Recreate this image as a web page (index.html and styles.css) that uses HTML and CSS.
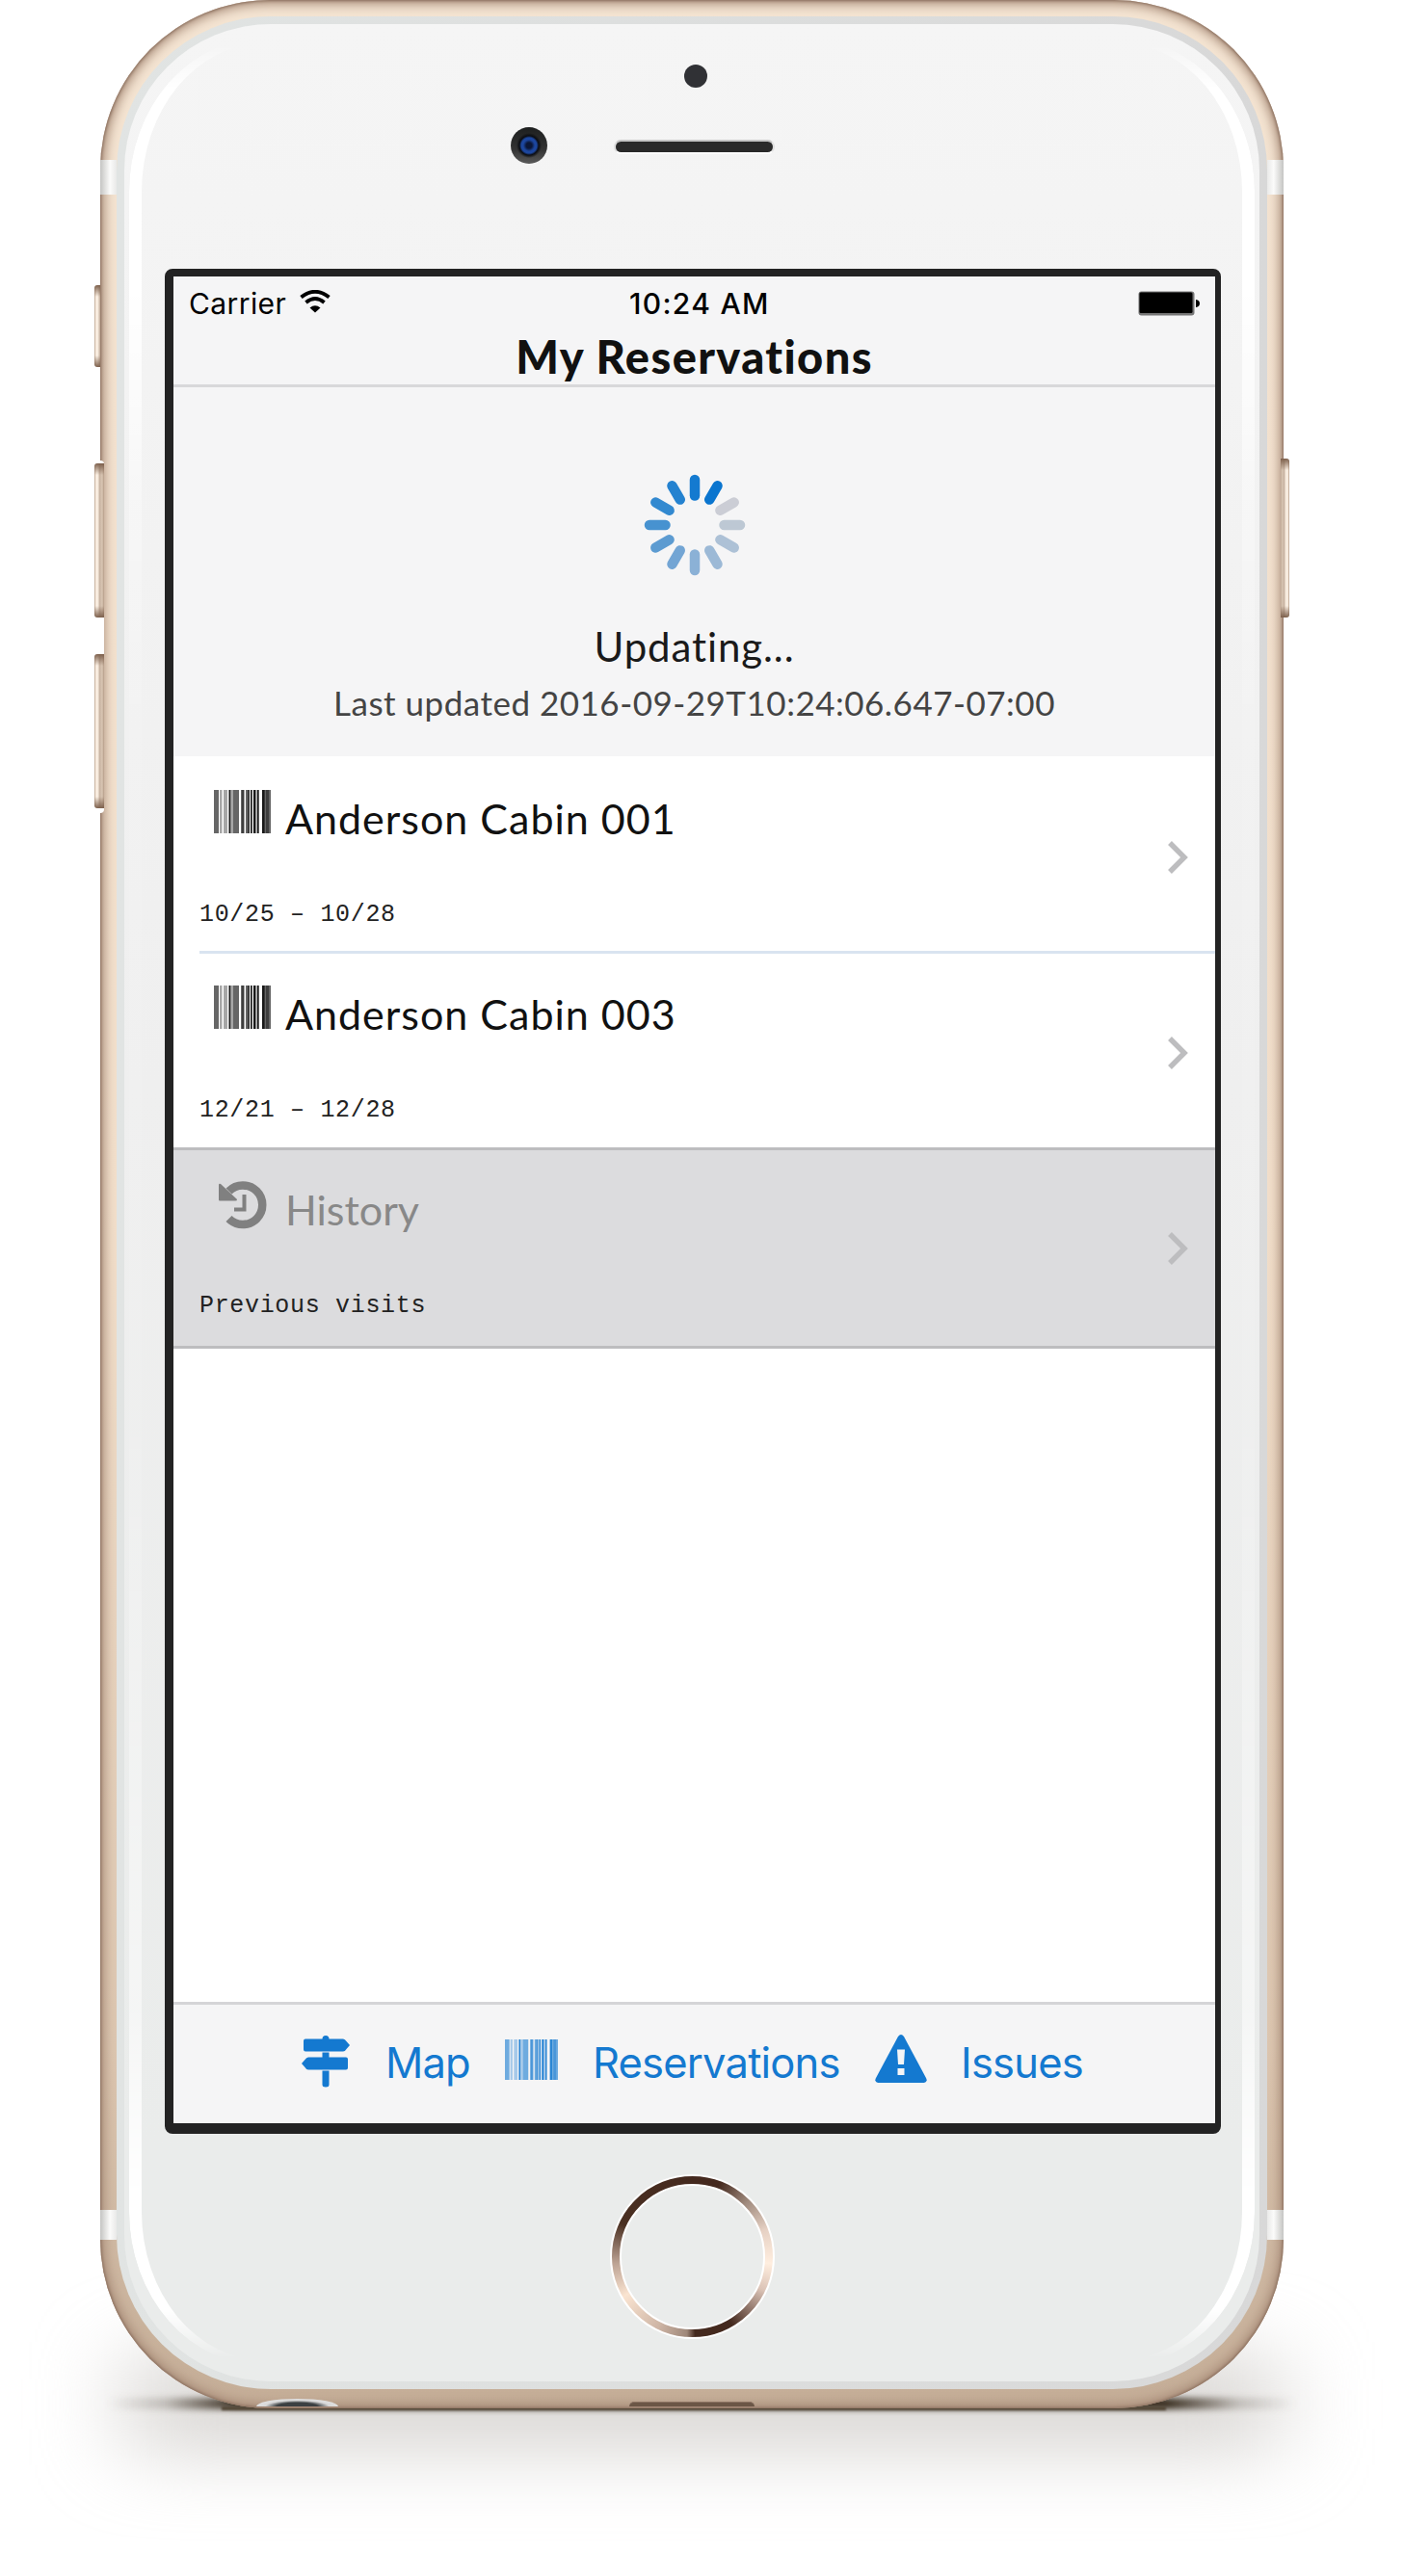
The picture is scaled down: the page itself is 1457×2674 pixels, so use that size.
FILE: index.html
```html
<!DOCTYPE html>
<html lang="en">
<head>
<meta charset="utf-8">
<title>My Reservations</title>
<link rel="stylesheet" href="styles.css">
</head>
<body>
<svg class="symbols" width="0" height="0" aria-hidden="true">
  <symbol id="barcode" viewBox="0 0 59 45" preserveAspectRatio="none">
    <path fill-opacity=".6" d="M0 0h5v45H0zM20 0h6v45h-6zM28 0h3v45h-3zM33 0h4v45h-4zM52 0h7v45h-7z"/>
    <path fill-opacity=".35" d="M6 0h2.500v45H6zM10 0h4v45h-4zM18 0h2v45h-2zM31 0h1v45h-1z"/>
    <path fill-opacity=".9" d="M15.500 0h2v45h-2zM38 0h1.700v45h-1.700zM41 0h2.500v45H41zM44.700 0h2v45h-2zM50 0h2.500v45H50z"/>
    <path fill-opacity=".4" d="M54 0h3v45h-3zM29 0h2v45h-2zM35 0h2v45h-2z"/>
  </symbol>
  <symbol id="chevron" viewBox="0 0 24 36">
    <path d="M3 3l15 15L3 33" fill="none" stroke="currentColor" stroke-width="5.500"/>
  </symbol>
</svg>
<main class="stage">
  <div class="shadow shadow-wide"></div>
  <div class="shadow shadow-contact"></div>
  <div class="shadow shadow-line"></div>
  <div class="notch"></div>
  <div class="key key-mute"></div>
  <div class="key key-up"></div>
  <div class="key key-down"></div>
  <div class="key key-power"></div>
  <section class="phone">
    <i class="band band-tl"></i><i class="band band-tr"></i><i class="band band-bl"></i><i class="band band-br"></i>
    <i class="jack"></i><i class="port"></i>
    <div class="face">
      <i class="gloss gloss-left"></i><i class="gloss gloss-right"></i>
      <i class="sensor"></i><i class="camera"></i><i class="speaker"></i>
      <div class="screen">
        <header class="top">
          <div class="status">
            <span class="carrier">Carrier</span>
            <svg class="wifi" viewBox="0 0 32 24" width="32" height="24"><path d="M1.500 7.500Q16-4 30.500 7.500M6.500 13Q16 5 25.500 13" fill="none" stroke="#000" stroke-width="3.800"/><path d="M10.500 18.500Q16 14 21.500 18.500L16 23.500z"/></svg>
            <span class="clock">10:24 AM</span>
            <svg class="battery" viewBox="0 0 65 26" width="65" height="26"><rect x=".5" y=".5" width="58" height="25" rx="3" fill="#777"/><rect x="1.500" y="1.500" width="55" height="21.500" rx="1.500"/><path d="M60 9q4 .5 4 4t-4 4z"/></svg>
          </div>
          <h1 class="title">My Reservations</h1>
        </header>
        <div class="refresh">
          <svg class="spinner" viewBox="-54 -54 108 108" width="108" height="108" stroke-width="10.500" stroke-linecap="round">
            <path d="M0-47v16.500" stroke="#147ad0"/>
            <path d="M0-47v16.500" transform="rotate(30)" stroke="#0a75cf"/>
            <path d="M0-47v16.500" transform="rotate(60)" stroke="#cbcdd5"/>
            <path d="M0-47v16.500" transform="rotate(90)" stroke="#bdc8d4"/>
            <path d="M0-47v16.500" transform="rotate(120)" stroke="#adc1d6"/>
            <path d="M0-47v16.500" transform="rotate(150)" stroke="#9cb9d6"/>
            <path d="M0-47v16.500" transform="rotate(180)" stroke="#8bb1d6"/>
            <path d="M0-47v16.500" transform="rotate(210)" stroke="#73a5d4"/>
            <path d="M0-47v16.500" transform="rotate(240)" stroke="#5c9bd1"/>
            <path d="M0-47v16.500" transform="rotate(270)" stroke="#4792d0"/>
            <path d="M0-47v16.500" transform="rotate(300)" stroke="#3289d0"/>
            <path d="M0-47v16.500" transform="rotate(330)" stroke="#2482d0"/>
          </svg>
          <p class="updating">Updating...</p>
          <p class="updated">Last updated 2016-09-29T10:24:06.647-07:00</p>
        </div>
        <ul class="list">
          <li class="row">
            <div class="name"><svg class="row-icon"><use href="#barcode"/></svg><span class="label">Anderson Cabin 001</span></div>
            <span class="dates">10/25 – 10/28</span>
            <svg class="chevron"><use href="#chevron"/></svg>
          </li>
          <li class="row ruled">
            <div class="name"><svg class="row-icon"><use href="#barcode"/></svg><span class="label">Anderson Cabin 003</span></div>
            <span class="dates">12/21 – 12/28</span>
            <svg class="chevron"><use href="#chevron"/></svg>
          </li>
          <li class="row history">
            <div class="name"><svg class="row-icon history-icon" viewBox="0 0 59 50"><path d="M15.500 10.500A20.300 20.300 0 1 1 15.500 39" fill="none" stroke="#808080" stroke-width="8.500"/><path d="M5 4q0-2 2-1l17 16q0 1.500-1.500 1.500H6q-1 0-1-1z" fill="#808080"/><path d="M31.500 14v15.500H21" fill="none" stroke="#808080" stroke-width="4"/></svg><span class="label">History</span></div>
            <span class="dates visits">Previous visits</span>
            <svg class="chevron"><use href="#chevron"/></svg>
          </li>
        </ul>
        <nav class="tabs">
          <a class="tab tab-map"><svg viewBox="0 0 50 54" width="50" height="54"><path d="M21.500 3.500q0-3.500 3.500-3.500t3.500 3.500zM21.500 17.500h7v5h-7zM21.500 36.500h7V51q0 2.500-3.500 2.500T21.500 51zM4 3.500h39q2 0 3.500 2.500l3.500 4-3.500 4q-1.500 2.500-3.500 2.500H4q-2 0-2-2v-9q0-2 2-2zM46 22.500H7Q5 22.500 3.500 25L0 29l3.500 4q1.500 2.500 3.500 2.500h39q2 0 2-2v-9q0-2-2-2z"/></svg><span class="tab-text">Map</span></a>
          <a class="tab tab-res"><svg width="55" height="42"><use href="#barcode"/></svg><span class="tab-text">Reservations</span></a>
          <a class="tab tab-issues"><svg viewBox="0 0 54 50" width="54" height="50"><path d="M24 2q3-4 6 0l23 43q2 4-2 5H3q-4-1-2-5z"/><path fill="#f5f5f6" d="M23 15.500h8L30 31h-6zM23.500 35h7v7h-7z"/></svg><span class="tab-text">Issues</span></a>
        </nav>
      </div>
      <div class="home"><i></i></div>
    </div>
  </section>
</main>
</body>
</html>
```
FILE: styles.css
```css
* { box-sizing: border-box; }
body { margin: 0; background: #fff; font-family: Lato, sans-serif; }
h1, p, ul { margin: 0; padding: 0; }
.symbols { position: absolute; }
.stage { position: relative; width: 1457px; height: 2674px; overflow: hidden; padding-left: 104px; }

.shadow { position: absolute; }
.shadow-wide { left: 130px; top: 2460px; width: 1197px; height: 70px; background: #c8c4c0; filter: blur(45px); }
.shadow-contact { left: 110px; top: 2489px; width: 1236px; height: 12px; background: linear-gradient(90deg, transparent, rgba(59, 48, 34, .2) 5%, #3b3022 11%, #3b3022 89%, rgba(59, 48, 34, .2) 95%, transparent); filter: blur(3px); }
.shadow-line { left: 230px; top: 2498px; width: 980px; height: 4px; background: #544838; filter: blur(1px); }

.notch { position: absolute; z-index: 1; left: 103px; top: 478px; width: 5px; height: 366px; background: #fff; border-radius: 0 4px 4px 0; }
.key { position: absolute; z-index: 1; left: 98px; width: 10px; border-radius: 3px 0 0 3px; background: linear-gradient(#7d604c, rgba(125, 96, 76, 0) 12px, rgba(125, 96, 76, 0) calc(100% - 12px), #7d604c), linear-gradient(90deg, #c9b3a0 0 1px, #f8ecdf 1px 4px, #c7b2a1 5px, #d8c5b2 8px, #b59c88); }
.key-mute { top: 296px; width: 6px; height: 85px; }
.key-up { top: 481px; height: 160px; }
.key-down { top: 679px; height: 160px; }
.key-power { left: 1329px; width: 9px; top: 476px; height: 165px; transform: scaleX(-1); }

.phone { position: relative; width: 1228px; height: 2500px; padding: 17px; border-radius: 176px; background: linear-gradient(#f4e4d2 0%, #f2dfcb 50%, #dcc6b0 85%, #c4ad97 100%); box-shadow: inset 0 0 3px 1px #8a6f5e, inset 0 0 12px 4px #a68a77; }
.band { position: absolute; width: 17px; height: 36px; background: linear-gradient(90deg, #c5c5c3, #fbfbfa 60%, #e9e9e8); }
.band-tl { left: 0; top: 166px; }
.band-tr { right: 0; top: 166px; transform: scaleX(-1); }
.band-bl { left: 0; top: 2294px; height: 31px; }
.band-br { right: 0; top: 2294px; height: 31px; transform: scaleX(-1); }
.jack { position: absolute; left: 162px; bottom: 2px; width: 85px; height: 8px; border-radius: 50% 50% 0 0 / 100% 100% 0 0; background: radial-gradient(ellipse at 50% 100%, #3b4042 35%, #d8d8d8 55%, #eee); }
.port { position: absolute; left: 549px; bottom: 2px; width: 130px; height: 5px; border-radius: 8px 8px 0 0; background: #6b5646; border-top: 1px solid #8a7262; }

.face { position: relative; width: 1194px; height: 2463px; padding: 254px 0 0 42px; border: 8px solid transparent; border-radius: 160px; background: linear-gradient(#f5f5f5 0%, #f3f3f3 15%, #efefef 45%, #eaeceb 90%, #eaeceb 100%) padding-box, linear-gradient(90deg, #e1e4e3, #d8d8d8) border-box; }
.gloss { position: absolute; top: 14px; width: 140px; height: 2417px; border: 6px solid #fff; -webkit-mask: linear-gradient(transparent 6px, #000 55px, #000 10%, rgba(0,0,0,.35) 20%, rgba(0,0,0,.1) 30%, rgba(0,0,0,.1) 60%, rgba(0,0,0,.5) 85%, #000 93%, #000 97.500%, transparent 99.700%); mask: linear-gradient(transparent 6px, #000 55px, #000 10%, rgba(0,0,0,.35) 20%, rgba(0,0,0,.1) 30%, rgba(0,0,0,.1) 60%, rgba(0,0,0,.5) 85%, #000 93%, #000 97.500%, transparent 99.700%); }
.gloss-left { left: 5px; border-left-width: 13px; border-right: 0; border-radius: 140px 0 0 140px / 160px 0 0 160px; }
.gloss-right { right: 5px; border-right-width: 13px; border-left: 0; border-radius: 0 140px 140px 0 / 0 160px 160px 0; }
.sensor { position: absolute; left: 581px; top: 42px; width: 24px; height: 24px; border-radius: 50%; background: #303135; }
.camera { position: absolute; left: 401px; top: 107px; width: 38px; height: 38px; border-radius: 50%; background: radial-gradient(circle, #0b1738 0 3px, #1c469e 6px 8px, #0b0d12 10px, rgba(11, 13, 18, 0) 13px), linear-gradient(#1d1f1f, #333 60%, #5a5a5a); }
.speaker { position: absolute; left: 508px; top: 120px; width: 167px; height: 15px; border-radius: 8px; border: 2px solid; border-color: #c6c6c6 #e0e0e0 #fff #dedede; background: #2a2a2a; }

.screen { width: 1096px; height: 1936px; border: solid #232323; border-width: 8px 6px 11px 9px; border-radius: 8px; background: #fff; display: flex; flex-direction: column; }
.top { height: 115px; background: #f5f5f6; border-bottom: 3px solid #d8d8da; }
.status { height: 56px; display: flex; align-items: center; padding-left: 16px; font: 30px Inter, sans-serif; }
.carrier { width: 100px; letter-spacing: .4px; white-space: nowrap; }
.wifi { margin-left: 15px; margin-top: -4px; }
.clock { width: 150px; margin-left: 310px; font-weight: 500; letter-spacing: 1.3px; white-space: nowrap; }
.battery { margin-left: auto; margin-right: 15px; }
.title { height: 56px; line-height: 54px; font-size: 47px; font-weight: 900; letter-spacing: 1.4px; text-align: center; white-space: nowrap; color: #111; }
.refresh { height: 383px; background: #f5f5f6; display: flex; flex-direction: column; align-items: center; color: #1a1a1a; }
.spinner { margin-top: 89px; }
.updating { margin-top: 46px; font-size: 42px; line-height: 52px; letter-spacing: .9px; }
.updated { margin-top: 10px; font-size: 35px; line-height: 44px; letter-spacing: .5px; color: #444; white-space: nowrap; }

.list { list-style: none; flex: 1; }
.row { position: relative; height: 202px; padding-left: 27px; }
.name { height: 110px; padding: 35px 0 0 15px; display: flex; align-items: flex-start; }
.row-icon { width: 59px; height: 45px; flex: none; }
.label { margin: 2px 0 0 15px; line-height: 56px; font-size: 43px; letter-spacing: 1px; white-space: nowrap; color: #111; }
.dates { display: block; margin-top: 39px; font: 25px/32px "Liberation Mono", monospace; letter-spacing: .67px; color: #222; }
.chevron { position: absolute; right: 26px; top: 87px; width: 24px; height: 36px; color: #bdbdbf; }
.ruled { height: 204px; margin-left: 27px; padding-left: 0; border-top: 3px solid #d9e4f0; }
.ruled .name { margin-top: -2px; }
.ruled .chevron { top: 85px; }
.history { height: 209px; background: #dcdcde; border: solid #bdbdbf; border-width: 3px 0; }
.history .name { margin-top: -3px; }
.history .chevron { top: 84px; }
.history-icon { height: 50px; }
.history .label { color: #888; letter-spacing: 0; }

.tabs { height: 126px; border-top: 3px solid #d5d5d7; background: #f5f5f6; display: flex; padding-left: 133px; color: #1479d0; font: 43.5px/56px Inter, sans-serif; letter-spacing: -.8px; }
.tab { display: flex; align-items: flex-start; }
.tab svg { fill: #1479d0; flex: none; margin-top: 32px; }
.tab-text { margin: 32px 0 0 37px; white-space: nowrap; }
.tab-map { width: 211px; }
.tab-res { width: 384px; }
.tab-res svg { margin-top: 36px; }
.tab-res .tab-text { margin-left: 36px; }
.tab-issues svg { margin-top: 31px; }
.tab-issues .tab-text { margin-left: 35px; }

.home { position: absolute; left: 504px; top: 2232px; width: 171px; height: 171px; padding: 8px; border-radius: 50%; border: 2px solid #fff; background: conic-gradient(#44291e 0deg 20deg, #a08b7e 45deg, #e6d1c4 70deg, #ffeedf 95deg, #dcc4b7 115deg, #44291e 150deg 178deg, #9e8779 184deg, #cdb4a4 205deg, #fae4d1 240deg, #bda394 265deg, #4a3022 295deg, #44291e 360deg); }
.home i { display: block; height: 100%; border-radius: 50%; border: 2px solid #fff; background: #eaeceb; }
```
